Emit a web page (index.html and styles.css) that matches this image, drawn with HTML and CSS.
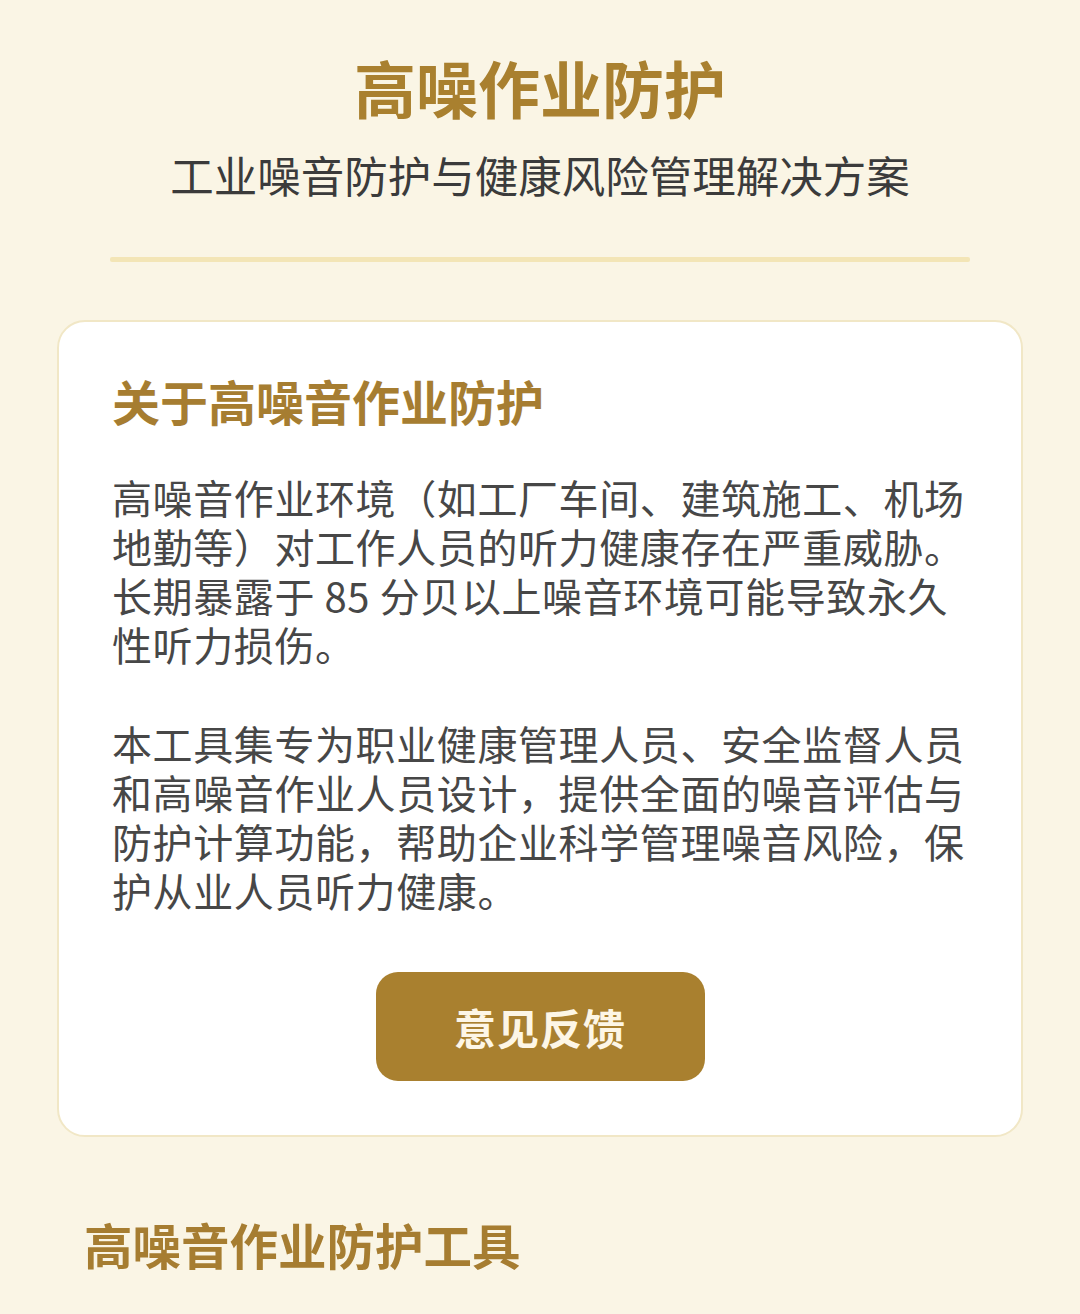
FILE: index.html
```html
<!DOCTYPE html>
<html lang="zh-CN">
<head>
  <meta charset="UTF-8" />
  <meta name="viewport" content="width=device-width, initial-scale=1" />
  <title>高噪作业防护</title>
  <link rel="stylesheet" href="styles.css">
</head>
<body>
  <div class="page">
    <header class="hero">
      <h1>高噪作业防护</h1>
      <p>工业噪音防护与健康风险管理解决方案</p>
    </header>

    <div class="divider"></div>

    <section class="about-card">
      <h2>关于高噪音作业防护</h2>
      <p>高噪音作业环境（如工厂车间、建筑施工、机场地勤等）对工作人员的听力健康存在严重威胁。长期暴露于 85 分贝以上噪音环境可能导致永久性听力损伤。</p>
      <p>本工具集专为职业健康管理人员、安全监督人员和高噪音作业人员设计，提供全面的噪音评估与防护计算功能，帮助企业科学管理噪音风险，保护从业人员听力健康。</p>
      <div class="actions">
        <button type="button" class="feedback-btn">意见反馈</button>
      </div>
    </section>

    <section class="tools-section">
      <h2>高噪音作业防护工具</h2>
    </section>
  </div>
</body>
</html>
```

FILE: styles.css
```css
:root {
  --page-bg: #faf5e5;
  --gold: #a9802f;
  --gold-text: #a67d31;
  --text-main: #474747;
  --text-sub: #3b3b3b;
  --line: #f3e5b6;
  --card-border: #f1e7c6;
}
body {
  margin: 0;
  padding: 0;
  background: var(--page-bg);
  font-family: "Noto Sans CJK SC", "Noto Sans", sans-serif;
  color: var(--text-main);
}
.page {
  padding: 49px 57px 40px 57px;
}
.hero {
  text-align: center;
}
.hero h1 {
  margin: 0;
  font-size: 62px;
  line-height: 76px;
  font-weight: 700;
  color: var(--gold);
}
.hero p {
  margin: 22px 0 0 0;
  font-size: 43.5px;
  line-height: 56px;
  color: var(--text-sub);
}
.divider {
  height: 5px;
  margin: 54px 53px 0 53px;
  background: var(--line);
  border-radius: 2px;
}
.about-card {
  margin-top: 58px;
  background: #fff;
  border: 2px solid var(--card-border);
  border-radius: 28px;
  padding: 47px 53px 54px 53px;
}
.about-card h2 {
  margin: 0;
  font-size: 48px;
  line-height: 62px;
  font-weight: 700;
  color: var(--gold-text);
}
.about-card p {
  margin: 42px 0 0 0;
  font-size: 40px;
  line-height: 49px;
  letter-spacing: 0.6px;
}
.about-card p + p {
  margin-top: 50px;
}
.actions {
  display: flex;
  justify-content: center;
  margin-top: 57px;
}
.feedback-btn {
  width: 329px;
  height: 109px;
  border: none;
  border-radius: 22px;
  background: var(--gold);
  color: #fdf6e6;
  font-family: inherit;
  font-size: 42px;
  font-weight: 700;
  letter-spacing: 1px;
  cursor: pointer;
}
.tools-section {
  margin-top: 76px;
  padding-left: 27px;
}
.tools-section h2 {
  margin: 0;
  font-size: 48.5px;
  line-height: 62px;
  font-weight: 700;
  color: var(--gold-text);
}
```
